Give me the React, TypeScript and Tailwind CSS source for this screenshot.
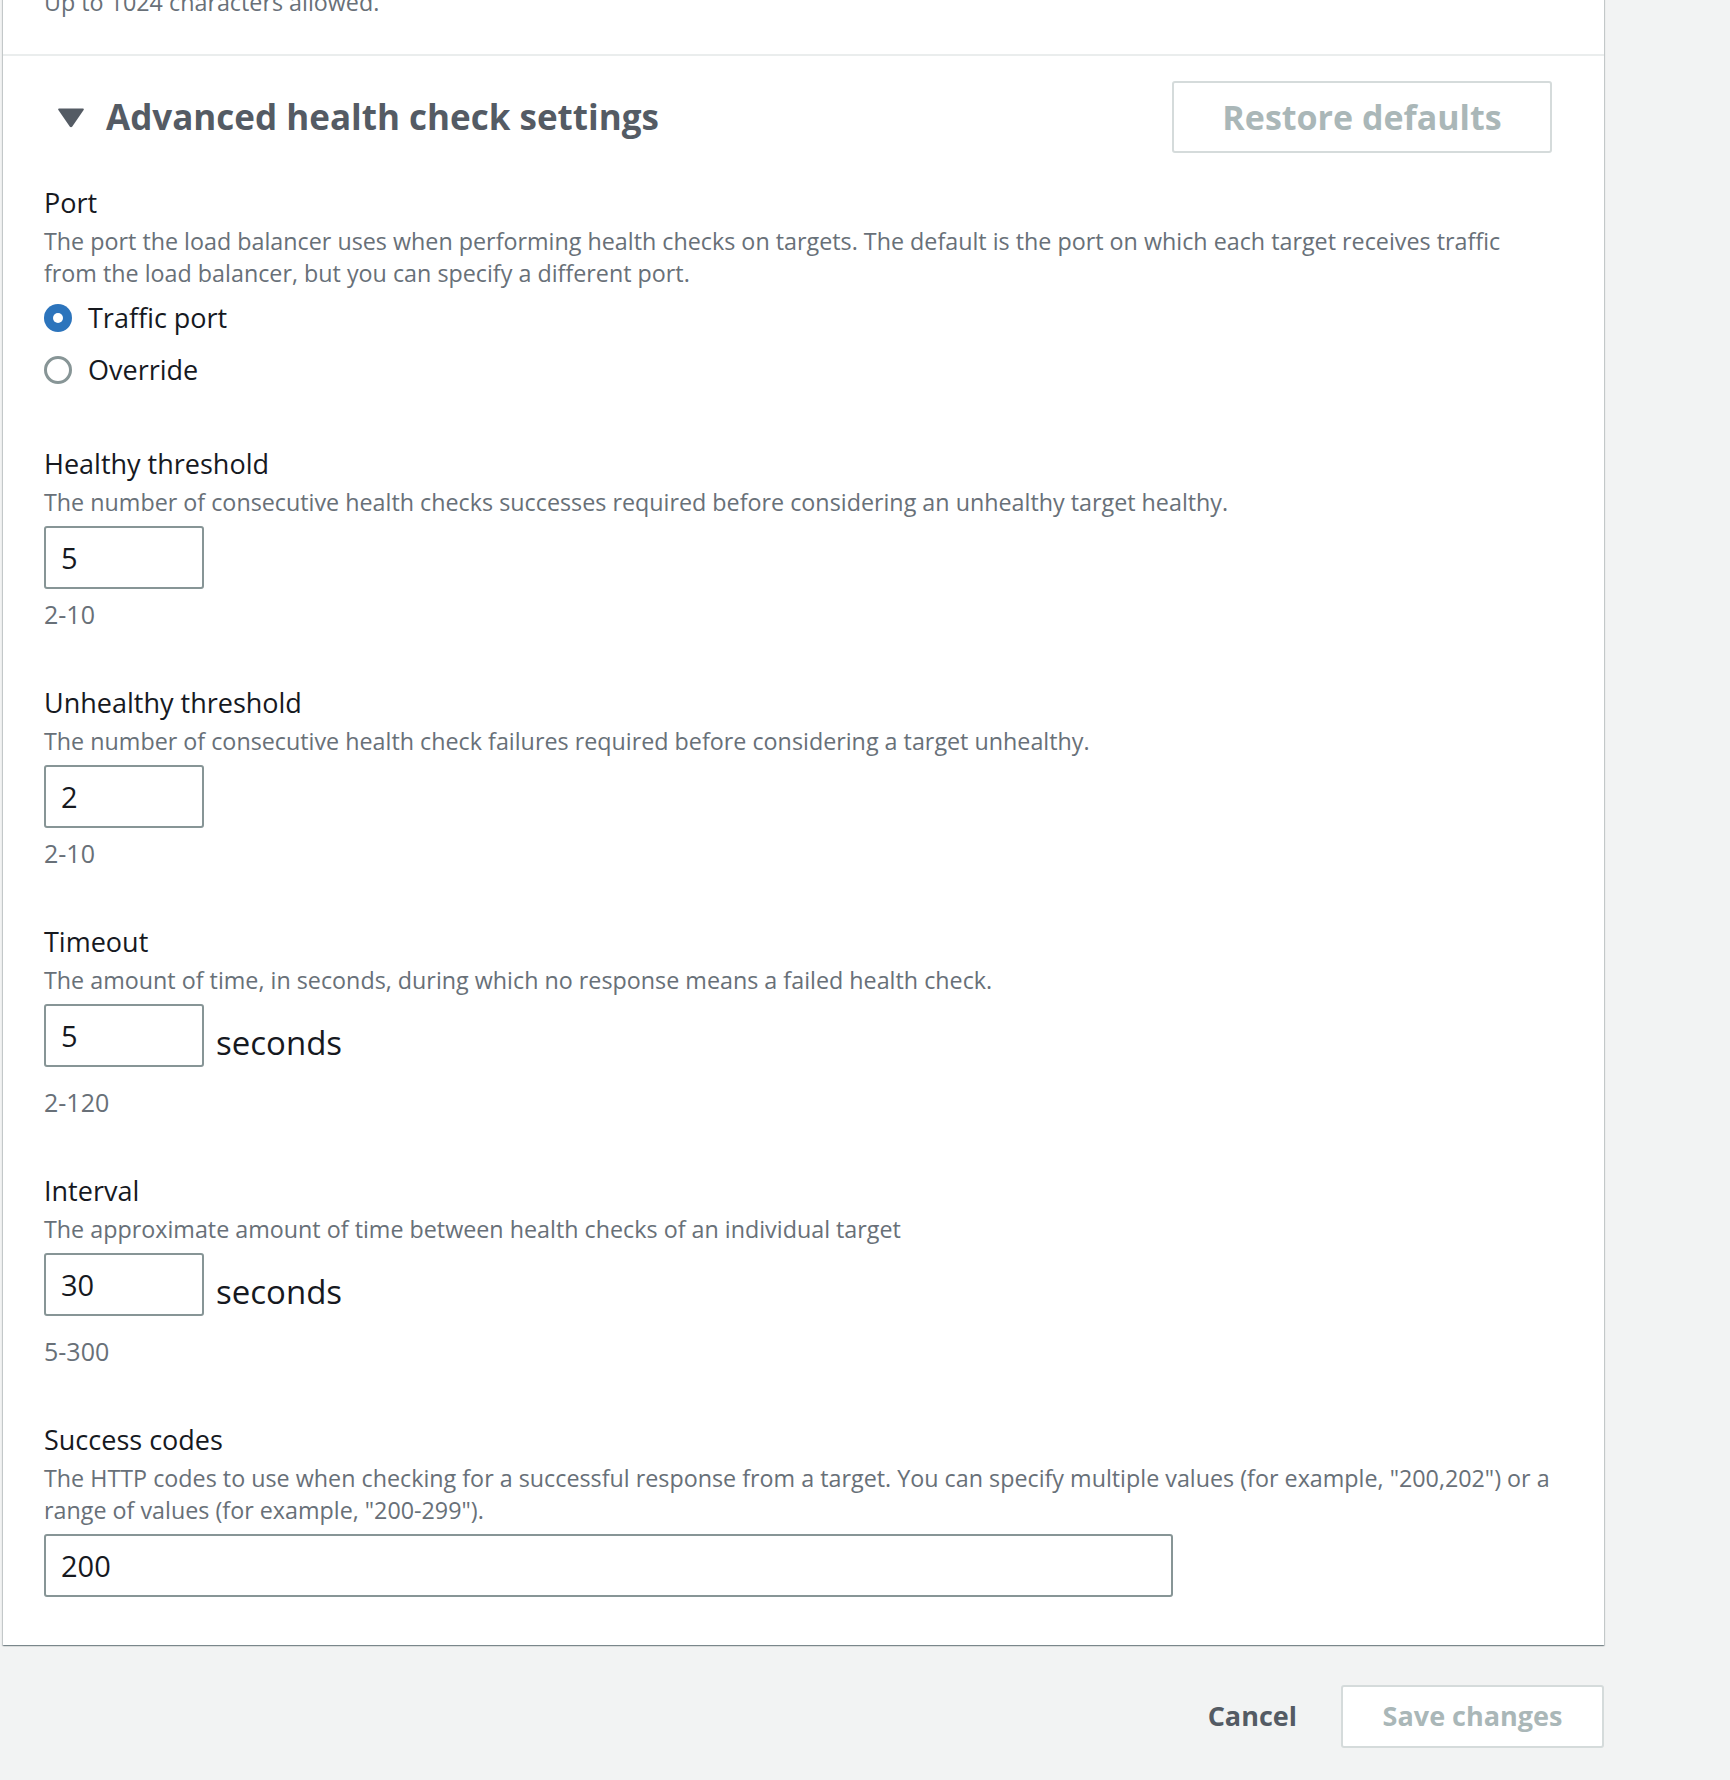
import React from 'react';

const font = { fontFamily: '"Open Sans", "Noto Sans", sans-serif' };

function Field({
  label,
  description,
  children,
  hint,
}: {
  label: string;
  description: React.ReactNode;
  children: React.ReactNode;
  hint?: string;
}) {
  return (
    <div className="flex flex-col">
      <div className="text-[27px] leading-[34px] font-medium text-[#16191f]">{label}</div>
      <p className="mt-[5px] text-[23.3px] leading-[32px] text-[#687078]">{description}</p>
      <div className="mt-[8px]">{children}</div>
      {hint && <div className="mt-[9px] text-[25px] leading-[32px] text-[#687078]">{hint}</div>}
    </div>
  );
}

function NumberInput({ value, unit }: { value: string; unit?: string }) {
  return (
    <div className="flex items-start">
      <div className="flex h-[63px] w-[160px] items-center rounded-[3px] border-2 border-[#879596] bg-white px-[15px] text-[29px] text-[#16191f]">
        {value}
      </div>
      {unit && <span className="ml-[12px] mt-[5px] text-[33px] leading-[68px] text-[#16191f]">{unit}</span>}
    </div>
  );
}

function Radio({ checked, label }: { checked?: boolean; label: string }) {
  return (
    <label className="flex h-[36px] items-center gap-[16px]">
      {checked ? (
        <span className="flex h-[28px] w-[28px] items-center justify-center rounded-full bg-[#2c74bc]">
          <span className="h-[10px] w-[10px] rounded-full bg-white" />
        </span>
      ) : (
        <span className="h-[28px] w-[28px] rounded-full border-[3px] border-[#879596] bg-white" />
      )}
      <span className="text-[27px] text-[#16191f]">{label}</span>
    </label>
  );
}

export default function App() {
  return (
    <div className="h-[1780px] w-full overflow-hidden bg-[#f2f3f3]" style={font}>
      {/* ─── Card ─── */}
      <div className="ml-[3px] w-[1601px] bg-white shadow-[0_1px_1px_0_rgba(0,28,36,0.3),1px_1px_1px_0_rgba(0,28,36,0.15),-1px_1px_1px_0_rgba(0,28,36,0.15)]">
        <div className="mt-[-14px] px-[41px] pb-[36px] text-[23.3px] leading-[32px] text-[#687078]">
          Up to 1024 characters allowed.
        </div>

        <div className="border-t-2 border-[#eaeded] px-[41px] pb-[48px]">
          {/* Header */}
          <div className="flex items-center justify-between pt-[25px] pl-[13px] pr-[11px]">
            <div className="flex items-center gap-[21px]">
              <svg width="28" height="21" viewBox="0 0 28 21">
                <path d="M2 1.5 H26 Q27.6 1.5 26.6 3 L15.3 19.5 Q14 21 12.7 19.5 L1.4 3 Q0.4 1.5 2 1.5 Z" fill="#545b64" />
              </svg>
              <h2 className="text-[35px] font-bold leading-[42px] text-[#545b64]">Advanced health check settings</h2>
            </div>
            <button className="h-[72px] w-[380px] rounded-[3px] border-2 border-[#d5dbdb] bg-white text-[34px] font-bold text-[#aab7b8]">
              Restore defaults
            </button>
          </div>

          {/* Port */}
          <div className="mt-[33px] flex flex-col">
            <div className="text-[27px] leading-[34px] font-medium text-[#16191f]">Port</div>
            <p className="mt-[5px] text-[23.3px] leading-[32px] text-[#687078]">
              The port the load balancer uses when performing health checks on targets. The default is the port on which each target receives traffic
              <br />
              from the load balancer, but you can specify a different port.
            </p>
            <div className="mt-[11px] flex flex-col gap-[16px]">
              <Radio checked label="Traffic port" />
              <Radio label="Override" />
            </div>
          </div>

          <div className="mt-[59px] flex flex-col gap-[56px]">
            <Field
              label="Healthy threshold"
              description="The number of consecutive health checks successes required before considering an unhealthy target healthy."
              hint="2-10"
            >
              <NumberInput value="5" />
            </Field>
            <Field
              label="Unhealthy threshold"
              description="The number of consecutive health check failures required before considering a target unhealthy."
              hint="2-10"
            >
              <NumberInput value="2" />
            </Field>
            <Field
              label="Timeout"
              description="The amount of time, in seconds, during which no response means a failed health check."
              hint="2-120"
            >
              <NumberInput value="5" unit="seconds" />
            </Field>
            <Field
              label="Interval"
              description="The approximate amount of time between health checks of an individual target"
              hint="5-300"
            >
              <NumberInput value="30" unit="seconds" />
            </Field>
            <Field
              label="Success codes"
              description={
                <>
                  The HTTP codes to use when checking for a successful response from a target. You can specify multiple values (for example, "200,202") or a
                  <br />
                  range of values (for example, "200-299").
                </>
              }
            >
              <div className="flex h-[63px] w-[1129px] items-center rounded-[3px] border-2 border-[#879596] bg-white px-[15px] text-[29px] text-[#16191f]">
                200
              </div>
            </Field>
          </div>
        </div>
      </div>

      {/* ─── Footer actions ─── */}
      <div className="mt-[40px] flex w-[1604px] items-center justify-end gap-[24px]">
        <button className="px-[20px] text-[27px] font-bold text-[#545b64]">Cancel</button>
        <button className="h-[63px] w-[263px] rounded-[3px] border-2 border-[#d5dbdb] bg-white text-[27px] font-bold text-[#aab7b8]">
          Save changes
        </button>
      </div>
    </div>
  );
}
